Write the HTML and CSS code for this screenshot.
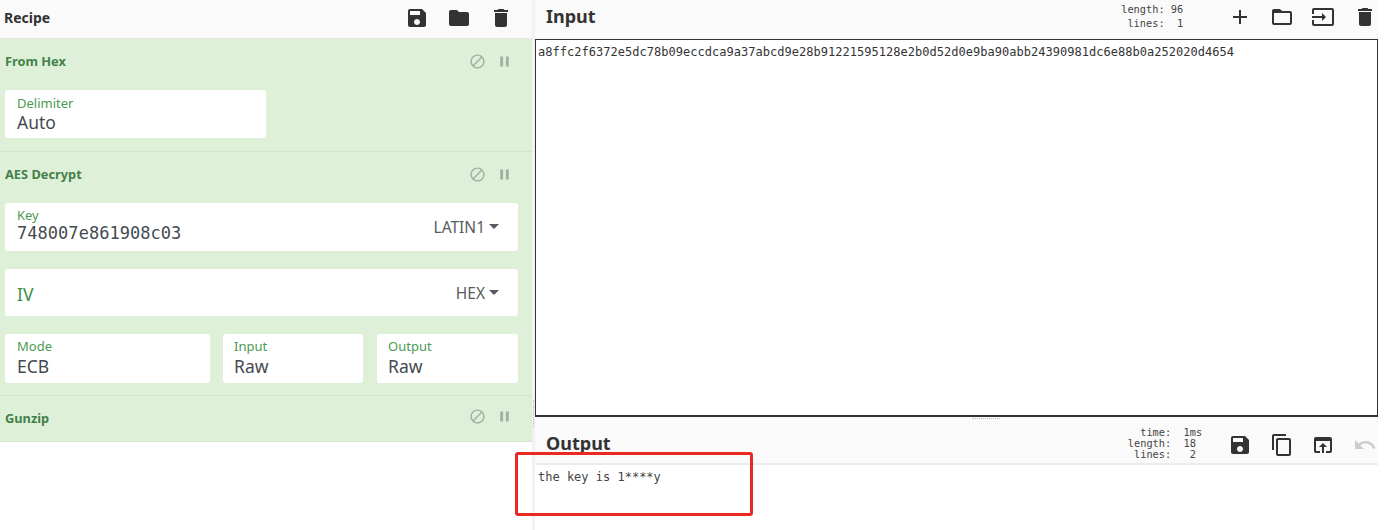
FILE: index.html
```html
<!DOCTYPE html>
<html lang="en">
<head>
<meta charset="utf-8">
<title>CyberChef</title>
<link rel="stylesheet" href="styles.css">
</head>
<body>
<svg class="defs" width="0" height="0" aria-hidden="true">
  <symbol id="i-save" viewBox="0 0 24 24"><path d="M17 3H5c-1.11 0-2 .9-2 2v14c0 1.1.89 2 2 2h14c1.1 0 2-.9 2-2V7l-4-4zm-5 16c-1.66 0-3-1.34-3-3s1.34-3 3-3 3 1.34 3 3-1.34 3-3 3zm3-10H5V5h10v4z"/></symbol>
  <symbol id="i-folder" viewBox="0 0 24 24"><path d="M10 4H4c-1.1 0-1.99.9-1.99 2L2 18c0 1.1.9 2 2 2h16c1.1 0 2-.9 2-2V8c0-1.1-.9-2-2-2h-8l-2-2z"/></symbol>
  <symbol id="i-trash" viewBox="0 0 24 24"><path d="M6 19c0 1.1.9 2 2 2h8c1.1 0 2-.9 2-2V7H6v12zM19 4h-3.5l-1-1h-5l-1 1H5v2h14V4z"/></symbol>
  <symbol id="i-add" viewBox="0 0 24 24"><path d="M19 13h-6v6h-2v-6H5v-2h6V5h2v6h6v2z"/></symbol>
  <symbol id="i-open" viewBox="0 0 24 24"><path d="M20 6h-8l-2-2H4c-1.1 0-1.99.9-1.99 2L2 18c0 1.1.9 2 2 2h16c1.1 0 2-.9 2-2V8c0-1.1-.9-2-2-2zm0 12H4V8h16v10z"/></symbol>
  <symbol id="i-input" viewBox="0 0 24 24"><path d="M21 3.01H3c-1.1 0-2 .9-2 2V9h2V4.99h18v14.03H3V15H1v4.01c0 1.1.9 1.98 2 1.98h18c1.1 0 2-.88 2-1.98v-14c0-1.11-.9-2-2-2zM11 16l4-4-4-4v3H1v2h10v3z"/></symbol>
  <symbol id="i-copy" viewBox="0 0 24 24"><path d="M16 1H4c-1.1 0-2 .9-2 2v14h2V3h12V1zm3 4H8c-1.1 0-2 .9-2 2v14c0 1.1.9 2 2 2h11c1.1 0 2-.9 2-2V7c0-1.1-.9-2-2-2zm0 16H8V7h11v14z"/></symbol>
  <symbol id="i-browser" viewBox="0 0 24 24"><path d="M19 4H5c-1.11 0-2 .9-2 2v12c0 1.1.89 2 2 2h4v-2H5V8h14v10h-4v2h4c1.1 0 2-.9 2-2V6c0-1.1-.89-2-2-2zm-7 6l-4 4h3v6h2v-6h3l-4-4z"/></symbol>
  <symbol id="i-undo" viewBox="0 0 24 24"><path d="M12.5 8c-2.65 0-5.05.99-6.9 2.6L2 7v9h9l-3.62-3.62c1.39-1.16 3.16-1.88 5.12-1.88 3.54 0 6.55 2.31 7.6 5.5l2.37-.78C21.08 11.03 17.15 8 12.5 8z"/></symbol>
  <symbol id="i-block" viewBox="0 0 24 24"><path d="M12 2C6.48 2 2 6.48 2 12s4.48 10 10 10 10-4.48 10-10S17.52 2 12 2zM4 12c0-4.42 3.58-8 8-8 1.85 0 3.55.63 4.9 1.69L5.69 16.9C4.63 15.55 4 13.85 4 12zm8 8c-1.85 0-3.55-.63-4.9-1.69L18.31 7.1C19.37 8.45 20 10.15 20 12c0 4.42-3.58 8-8 8z"/></symbol>
  <symbol id="i-pause" viewBox="0 0 24 24"><path d="M6 19h4V5H6v14zm8-14v14h4V5h-4z"/></symbol>
</svg>

<div class="app">
  <section class="recipe">
    <header class="recipe-head">
      <h2 class="recipe-title">Recipe</h2>
      <div class="tools recipe-tools">
        <svg class="ic"><use href="#i-save"/></svg>
        <svg class="ic"><use href="#i-folder"/></svg>
        <svg class="ic"><use href="#i-trash"/></svg>
      </div>
    </header>

    <article class="op op-hex">
      <div class="op-head">
        <span class="op-name">From Hex</span>
        <span class="op-ctl"><svg class="ic-s"><use href="#i-block"/></svg><svg class="ic-s"><use href="#i-pause"/></svg></span>
      </div>
      <div class="row">
        <div class="field w-delim"><label>Delimiter</label><div class="val">Auto</div></div>
      </div>
    </article>

    <article class="op op-aes">
      <div class="op-head">
        <span class="op-name">AES Decrypt</span>
        <span class="op-ctl"><svg class="ic-s"><use href="#i-block"/></svg><svg class="ic-s"><use href="#i-pause"/></svg></span>
      </div>
      <div class="row">
        <div class="field grow key">
          <div class="key-col"><label>Key</label><div class="val mono">748007e861908c03</div></div>
          <span class="drop">LATIN1<i class="caret"></i></span>
        </div>
      </div>
      <div class="row">
        <div class="field grow iv">
          <div class="iv-label">IV</div>
          <span class="drop">HEX<i class="caret"></i></span>
        </div>
      </div>
      <div class="row triple">
        <div class="field w-mode"><label>Mode</label><div class="val">ECB</div></div>
        <div class="field w-in"><label>Input</label><div class="val">Raw</div></div>
        <div class="field w-out"><label>Output</label><div class="val">Raw</div></div>
      </div>
    </article>

    <article class="op op-gz">
      <div class="op-head">
        <span class="op-name">Gunzip</span>
        <span class="op-ctl"><svg class="ic-s"><use href="#i-block"/></svg><svg class="ic-s"><use href="#i-pause"/></svg></span>
      </div>
    </article>
  </section>

  <div class="gutter"></div>

  <main class="io">
    <header class="io-head in-head">
      <h2 class="io-title">Input</h2>
      <pre class="stats">length: 96
 lines:  1</pre>
      <div class="tools io-tools">
        <svg class="ic"><use href="#i-add"/></svg>
        <svg class="ic"><use href="#i-open"/></svg>
        <svg class="ic"><use href="#i-input"/></svg>
        <svg class="ic"><use href="#i-trash"/></svg>
      </div>
    </header>
    <div class="input-box">a8ffc2f6372e5dc78b09eccdca9a37abcd9e28b91221595128e2b0d52d0e9ba90abb24390981dc6e88b0a252020d4654</div>
    <header class="io-head out-head">
      <i class="grip"></i>
      <h2 class="io-title">Output</h2>
      <pre class="stats">  time:  1ms
length:  18
 lines:   2</pre>
      <div class="tools io-tools">
        <svg class="ic"><use href="#i-save"/></svg>
        <svg class="ic"><use href="#i-copy"/></svg>
        <svg class="ic"><use href="#i-browser"/></svg>
        <svg class="ic faded"><use href="#i-undo"/></svg>
      </div>
    </header>
    <div class="output-box">the key is 1****y</div>
  </main>
</div>
<div class="callout"></div>
</body>
</html>
```

FILE: styles.css
```css
* { box-sizing: border-box; }
html, body { margin: 0; height: 100%; background: #fff; overflow: hidden; }
body { font-family: "Noto Sans", "Open Sans", sans-serif; color: #333; }
.defs { position: absolute; }
.app { display: flex; width: 1384px; height: 530px; }

.recipe { width: 532px; flex: none; }
.recipe-head {
  height: 39px; background: #fafafa; border-bottom: 1px solid #e6e6e6;
  display: flex; align-items: center; justify-content: space-between;
  padding: 0 19px 2px 4px;
}
.recipe-title { margin: 0 0 2px; font-size: 14px; font-weight: 700; color: #333; }
.tools { display: flex; align-items: center; }
.recipe-tools { gap: 18px; }
.ic { width: 24px; height: 24px; fill: #333; display: block; }
.ic-s { width: 17px; height: 17px; fill: #9fb0a0; display: block; }
.faded { fill: #ccc; }

.op { background: #dff0d8; border-bottom: 1px solid #d3e5cb; padding: 0 14px 0 5px; }
.op-hex { height: 113px; }
.op-aes { height: 244px; }
.op-gz { height: 46px; }
.op-head { display: flex; justify-content: space-between; align-items: center; height: 51px; padding: 1px 0 12px; }
.op-gz .op-head { height: 44px; padding-bottom: 6px; }
.op-name { font-size: 12.8px; font-weight: 700; color: #44804a; position: relative; top: 2px; }
.op-ctl { display: flex; gap: 10px; padding-right: 5px; margin-top: 4px; }
.op-gz .op-ctl { margin-top: 2px; }

.row { display: flex; margin-bottom: 18px; }
.field { background: #fff; border-radius: 3px; padding: 6px 12px 0; height: 48px; }
.field label { display: block; font-size: 13px; line-height: 14px; color: #4b9a52; }
.val { font-size: 17.5px; line-height: 24px; color: #444a50; }
.val.mono { font-family: "DejaVu Sans Mono", monospace; font-size: 17px; line-height: 20px; letter-spacing: .04px; margin-top: 1px; }
.grow { flex: 1; display: flex; justify-content: space-between; align-items: center; padding-top: 0; }
.key-col { margin-bottom: 3px; }
.iv { height: 47px; }
.iv-label { font-size: 17.5px; color: #3f8f47; padding-top: 3px; }
.drop { font-size: 15.5px; color: #555b60; padding-right: 7px; display: flex; align-items: center; }
.key .drop { margin-top: 0; }
.iv .drop { margin-top: 1px; }
.caret { width: 0; height: 0; border: 5px solid transparent; border-top-color: #555b60; border-bottom: 0; margin-left: 4px; margin-top: -2px; }
.triple { margin-bottom: 0; height: 49px; }
.triple .field { height: 49px; padding-top: 5px; }
.triple .val { margin-top: 1px; }
.w-delim { width: 261px; }
.w-mode { width: 205px; }
.triple .w-in { width: 140px; padding-left: 11px; margin-left: 13px; }
.triple .w-out { width: 141px; padding-left: 11px; margin-left: 14px; }

.gutter { width: 3px; flex: none; background: #f2f2f2; position: relative; }
.gutter::after { content: ""; position: absolute; left: 1px; top: 400px; height: 28px; border-left: 1px dotted #bbb; }

.io { flex: none; width: 843px; display: flex; flex-direction: column; }
.io-head { background: #fafafa; display: flex; align-items: center; position: relative; }
.in-head { height: 39px; padding: 0 0 6px 11px; }
.out-head { height: 48px; padding: 0 0 0 11px; border-bottom: 2px solid #ececec; }
.io-title { margin: 0; font-size: 18px; font-weight: 700; color: #333; flex: 1; }
.in-head .io-title { margin-bottom: 2px; }
.out-head .io-title { padding-top: 5px; }
.stats {
  margin: 0; font-family: "DejaVu Sans Mono", monospace; font-size: 10.3px; line-height: 11px; color: #444;
}
.in-head .stats { line-height: 14px; margin: 0 45px 1px 0; }
.out-head .stats { margin: 6px 26px 0 0; }
.io-tools { gap: 17.6px; padding-right: 1px; }
.out-head .io-tools { padding-top: 10px; }
.input-box {
  height: 378px; border: 1px solid #333; border-bottom-width: 2px; background: #fff;
  font-family: "DejaVu Sans Mono", monospace; font-size: 12px; line-height: 14px; color: #333;
  padding: 5px 2px; letter-spacing: .025px;
  white-space: nowrap;
}
.output-box {
  flex: 1; background: #fff; padding: 5px 3px;
  font-family: "DejaVu Sans Mono", monospace; font-size: 12px; line-height: 14px; color: #444;
}
.grip { position: absolute; left: 437px; top: 1px; width: 28px; border-top: 1px dotted #bbb; }

.callout {
  position: absolute; left: 515px; top: 452px; width: 238px; height: 64px;
  border: 3px solid #ea2a20; border-radius: 3px;
}
```
